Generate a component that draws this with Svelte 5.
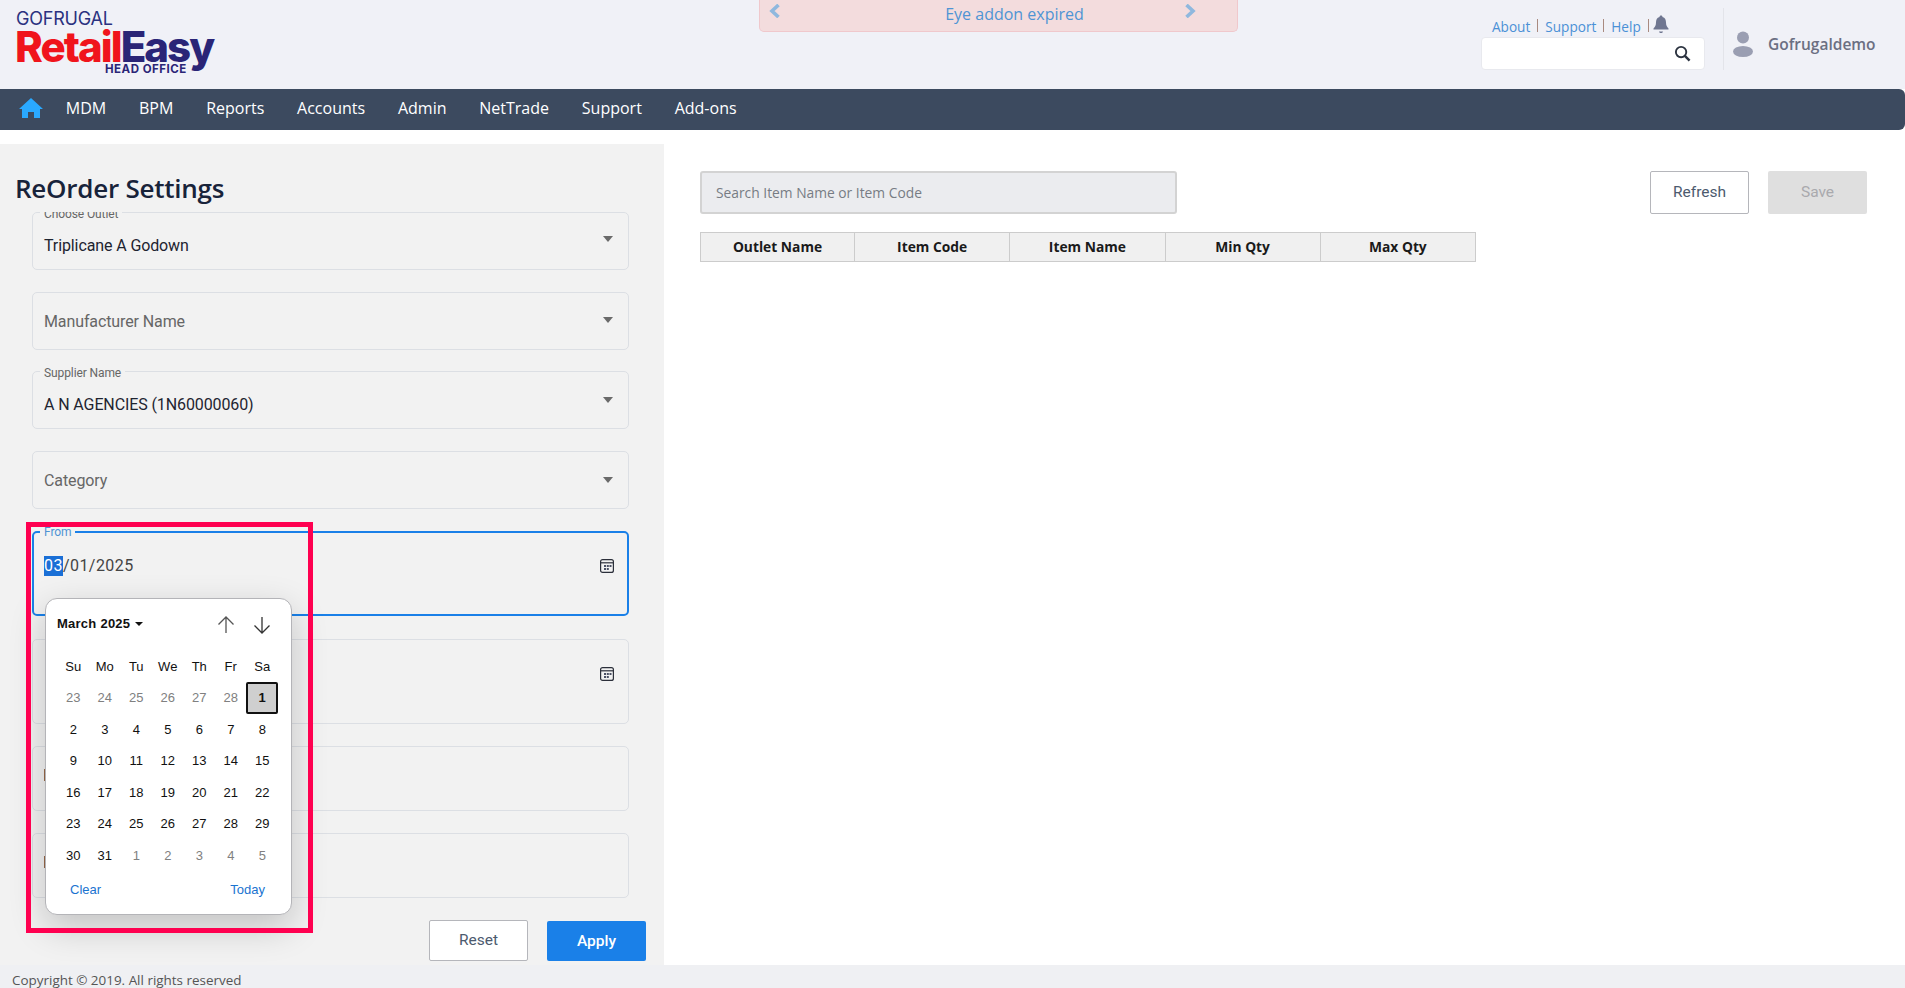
<script>
  const nav = ['MDM', 'BPM', 'Reports', 'Accounts', 'Admin', 'NetTrade', 'Support', 'Add-ons'];
  const days = ['Su', 'Mo', 'Tu', 'We', 'Th', 'Fr', 'Sa'];
  const columns = ['Outlet Name', 'Item Code', 'Item Name', 'Min Qty', 'Max Qty'];
  const cells = [
    ...[23, 24, 25, 26, 27, 28].map((d) => ({ d, muted: true })),
    ...Array.from({ length: 31 }, (_, i) => ({ d: i + 1, sel: i === 0 })),
    ...[1, 2, 3, 4, 5].map((d) => ({ d, muted: true }))
  ];
</script>

<div class="page">
  <header class="top">
    <div class="logo">
      <div class="brand">GOFRUGAL</div>
      <div class="name"><span class="red">Retail</span><span class="navy">Easy</span></div>
      <div class="office">HEAD OFFICE</div>
    </div>
    <div class="banner">
      <svg class="chev" viewBox="0 0 12 14" width="12" height="14"><path d="M9.5 1 3 7l6.500 6" fill="none" stroke="#8fb8de" stroke-width="3.600"/></svg>
      <span class="msg">Eye addon expired</span>
      <svg class="chev" viewBox="0 0 12 14" width="12" height="14"><path d="M2.500 1 9 7l-6.500 6" fill="none" stroke="#8fb8de" stroke-width="3.600"/></svg>
    </div>
    <div class="tools">
      <div class="links-col">
        <div class="links">
          <a href="#a">About</a><i></i><a href="#a">Support</a><i></i><a href="#a">Help</a><i></i>
          <svg viewBox="0 0 16 19" width="16" height="19"><path d="M8 0.500c1 0 1.500.7 1.500 1.500 2.700.7 3.500 3 3.500 5.500 0 3 1 4.500 2.500 6v1H.5v-1C2 12 3 10.500 3 7.500 3 5 3.800 2.700 6.500 2 6.500 1.200 7 .5 8 .5Z" fill="#6f7690"/><path d="M6 16.500h4c-.3 1-1 1.500-2 1.500s-1.700-.5-2-1.500Z" fill="#6f7690"/></svg>
        </div>
        <div class="search">
          <svg viewBox="0 0 18 18" width="17" height="17"><circle cx="7.500" cy="7.500" r="5.500" fill="none" stroke="#2c3340" stroke-width="2"/><path d="m11.500 11.500 5 5" stroke="#2c3340" stroke-width="2.600"/></svg>
        </div>
      </div>
      <div class="user">
        <svg viewBox="0 0 20 26" width="20" height="26"><circle cx="10" cy="6.500" r="6" fill="#9a9eb2"/><ellipse cx="10" cy="20.500" rx="10" ry="5.500" fill="#9a9eb2"/></svg>
        <span>Gofrugaldemo</span>
      </div>
    </div>
  </header>

  <nav class="nav">
    <svg class="home" viewBox="0 0 24 20" width="24" height="20"><path d="M12 0 24 11h-3v9h-6v-6H9v6H3v-9H0Z" fill="#2aa9ff"/></svg>
    {#each nav as n}<span>{n}</span>{/each}
  </nav>

  <main class="main">
    <section class="left">
      <h1>ReOrder Settings</h1>
      <div class="form">
        <div class="field"><label class="clip" for="a1">Choose Outlet</label><span id="a1" class="val filled">Triplicane A Godown</span><b class="arrow up1"></b></div>
        <div class="field"><span class="val ph">Manufacturer Name</span><b class="arrow"></b></div>
        <div class="field"><label for="a2">Supplier Name</label><span id="a2" class="val filled">A N AGENCIES (1N60000060)</span><b class="arrow"></b></div>
        <div class="field"><span class="val ph">Category</span><b class="arrow"></b></div>
        <div class="field date focus">
          <label for="a3">From</label>
          <span id="a3" class="val"><mark>03</mark>/01/2025</span>
          <svg class="cal" viewBox="0 0 14 14" width="14" height="14"><rect x=".6" y=".6" width="12.800" height="12.800" rx="2" fill="none" stroke="#2b2f3a" stroke-width="1.200"/><path d="M1 3.800h12" stroke="#2b2f3a" stroke-width="1.200"/><path d="M4 6h2v2H4zM6.800 6h2v2h-2zM9.500 6h2v2h-2zM4 9h2v2H4zM6.800 9h2v2h-2z" fill="#4a5064"/></svg>
        </div>
        <div class="field date">
          <svg class="cal" viewBox="0 0 14 14" width="14" height="14"><rect x=".6" y=".6" width="12.800" height="12.800" rx="2" fill="none" stroke="#2b2f3a" stroke-width="1.200"/><path d="M1 3.800h12" stroke="#2b2f3a" stroke-width="1.200"/><path d="M4 6h2v2H4zM6.800 6h2v2h-2zM9.500 6h2v2h-2zM4 9h2v2H4zM6.800 9h2v2h-2z" fill="#4a5064"/></svg>
        </div>
        <div class="field short"><span class="tick"></span></div>
        <div class="field short last"><span class="tick"></span></div>
      </div>
      <div class="actions">
        <button class="btn ghost">Reset</button>
        <button class="btn primary">Apply</button>
      </div>

      <div class="popover">
        <div class="pop-head">
          <strong>March 2025</strong><b class="caret"></b>
          <svg class="nav-a" viewBox="0 0 18 18" width="18" height="18"><path d="M9 17V1M1.500 8.500 9 1l7.500 7.500" fill="none" stroke="#555" stroke-width="1.300"/></svg>
          <svg class="nav-b" viewBox="0 0 18 18" width="18" height="18"><path d="M9 1v16M1.500 9.500 9 17l7.500-7.500" fill="none" stroke="#333" stroke-width="1.300"/></svg>
        </div>
        <div class="grid">
          {#each days as d}<span class="cell">{d}</span>{/each}
          {#each cells as c}<span class="cell" class:muted={c.muted} class:sel={c.sel}>{c.d}</span>{/each}
        </div>
        <div class="pop-foot"><span>Clear</span><span>Today</span></div>
      </div>
      <div class="annot"></div>
    </section>

    <section class="right">
      <div class="toolbar">
        <div class="find">Search Item Name or Item Code</div>
        <div class="tool-btns">
          <button class="btn ghost tall">Refresh</button>
          <button class="btn off tall">Save</button>
        </div>
      </div>
      <div class="thead">
        {#each columns as c}<div>{c}</div>{/each}
      </div>
    </section>
  </main>

  <footer class="foot">Copyright © 2019. All rights reserved</footer>
</div>

<style>
  :global(body) { margin: 0; background: #fff; overflow: hidden; }
  .page { width: 1905px; height: 988px; display: flex; flex-direction: column; font-family: "Open Sans", sans-serif; overflow: hidden; }

  .top { height: 89px; flex: none; background: #f0f1f7; display: grid; grid-template-columns: 759px 479px 1fr; align-items: start; }
  .logo { padding: 11px 0 0 15px; display: flex; flex-direction: column; font-family: Inter, sans-serif; }
  .brand { font-size: 18px; line-height: 16px; color: #2b3180; letter-spacing: -0.200px; font-weight: 400; padding-left: 1px; }
  .name { font-size: 42px; line-height: 35px; font-weight: 800; letter-spacing: -1.950px; margin-top: 2px; }
  .red { color: #f0141c; }
  .navy { color: #2a2577; }
  .office { font-size: 11.500px; line-height: 12px; font-weight: 700; color: #2a2577; margin: -1px 0 0 90px; letter-spacing: 0.500px; }

  .banner { height: 32px; box-sizing: border-box; background: #f3dcdd; border: 1px solid #f0c8cc; border-top: 0; border-radius: 0 0 5px 5px; display: flex; justify-content: space-between; padding: 3px 41px 0 9px; color: #4f94d4; font-size: 16px; line-height: 22px; }
  .msg { padding-left: 64px; }
  .chev { margin-top: 1px; }

  .tools { display: flex; padding: 8px 0 0 243px; }
  .links-col { width: 224px; }
  .links { height: 29px; padding-left: 11px; display: flex; align-items: center; font-size: 13.600px; color: #4a90d6; box-sizing: border-box; padding-top: 8px; }
  .links a { color: inherit; text-decoration: none; }
  .links i { width: 1px; height: 13px; background: #a98a80; margin: -3px 7px 0; }
  .links svg { margin: -5px 0 0 -3px; }
  .search { height: 33px; box-sizing: border-box; background: #fff; border: 1px solid #e8e9ee; border-radius: 4px; display: flex; justify-content: flex-end; align-items: center; padding-right: 13px; }
  .user { margin-left: 18px; height: 62px; box-sizing: border-box; border-left: 1px solid #e3e4ea; padding: 10px 0 0 9px; display: flex; align-items: center; gap: 15px; font-size: 15.500px; font-weight: 600; color: #6b6f82; }

  .nav { height: 41px; box-sizing: border-box; padding-bottom: 3px; flex: none; background: #3c4a5f; border-radius: 0 6px 6px 0; display: flex; align-items: center; gap: 32.800px; padding-left: 19px; color: #fff; font-size: 16px; }
  .home { margin-right: -10px; }

  .main { flex: 1; display: flex; padding-top: 14px; min-height: 0; }
  .left { width: 664px; flex: none; background: #f2f2f2; position: relative; box-sizing: border-box; }
  h1 { margin: 0; padding: 26px 0 0 15px; height: 42px; font-size: 26px; line-height: 36px; font-weight: 600; color: #18233a; letter-spacing: -0.250px; }

  .form { height: 688px; padding: 0 35px 0 32px; display: flex; flex-direction: column; gap: 21.700px; overflow: hidden; box-sizing: border-box; font-family: Roboto, sans-serif; }
  .field { height: 58px; flex: none; box-sizing: border-box; border: 1px solid #dcdfe4; border-radius: 5px; position: relative; display: flex; align-items: center; padding: 0 12px 0 11px; }
  .field label { position: absolute; top: -6px; left: 7px; padding: 0 4px; background: #f2f2f2; font-size: 12px; line-height: 14px; color: #666; letter-spacing: -0.100px; }
  .val { flex: 1; font-size: 16px; line-height: 20px; color: #1e2430; white-space: nowrap; letter-spacing: -0.110px; }
  .val.filled { padding-top: 9px; }
  .val.ph { color: #666; padding-top: 2px; }
  .arrow { width: 0; height: 0; border: 5.500px solid transparent; border-top: 6px solid #6a6a6a; border-bottom: 0; margin: 0 3px 1px 0; }
  .arrow.up1 { margin-bottom: 4px; }

  .date { height: 85px; align-items: flex-start; padding-top: 24px; margin-top: 0.700px; }
  .date .val { color: #444; letter-spacing: 0.450px; }
  .date .cal { position: absolute; right: 14px; top: 27px; }
  .focus { border: 2px solid #1a80e8; padding-left: 10px; padding-top: 23px; }
  .focus label { top: -8px; left: 6px; color: #4f94d4; }
  .focus .cal { right: 13px; top: 26px; }
  mark { background: #1a6fd6; color: #fff; display: inline-block; }
  .short { height: 65px; }
  .last { margin-top: 1px; }
  .tick { width: 1px; height: 12px; background: #9a6a4a; align-self: flex-start; margin-top: 22px; }

  .actions { display: flex; justify-content: flex-end; gap: 19px; padding: 19.500px 18px 0 0; }
  .btn { width: 99px; height: 41px; box-sizing: border-box; border-radius: 2px; font-family: Roboto, sans-serif; font-size: 15.500px; padding: 0; }
  .ghost { background: #fff; border: 1px solid #b5b6bb; color: #4c5a6e; }
  .primary { background: #1a80e8; border: 0; color: #fff; height: 40px; margin-top: 1px; font-weight: 500; }
  .off { background: #dfdfdf; border: 0; color: #a9a9ad; }
  .tall { height: 43px; padding-bottom: 2px; }

  .popover { position: absolute; left: 45px; top: 454px; width: 247px; height: 317px; box-sizing: border-box; background: #fff; border: 1px solid #b4b4b8; border-radius: 12px; box-shadow: 0 12px 36px rgba(0, 0, 0, .2); font-family: "Liberation Sans", Arial, sans-serif; z-index: 2; }
  .pop-head { height: 51.500px; position: relative; display: flex; align-items: center; padding: 0 0 2px 11px; box-sizing: border-box; gap: 5px; font-size: 13px; color: #111; }
  .pop-head strong { letter-spacing: 0.250px; }
  .caret { border: 4px solid transparent; border-top: 4px solid #111; border-bottom: 0; }
  .nav-a { position: absolute; left: 171px; top: 17px; }
  .nav-b { position: absolute; left: 207px; top: 17px; }
  .grid { display: grid; grid-template-columns: repeat(7, 31.500px); grid-auto-rows: 31.500px; padding-left: 11.500px; font-size: 13px; color: #111; }
  .cell { display: flex; align-items: center; justify-content: center; box-sizing: border-box; }
  .muted { color: #808080; }
  .sel { background: #cfcfcf; border: 2px solid #111; border-radius: 2px; font-weight: 700; margin-left: -0.500px; }
  .pop-foot { display: flex; justify-content: space-between; padding: 10.500px 26px 0 24px; color: #1a73d0; font-size: 13px; line-height: 16px; }

  .annot { position: absolute; left: 26px; top: 378px; width: 287px; height: 411px; box-sizing: border-box; border: 5px solid #ff0050; z-index: 3; pointer-events: none; }

  .right { flex: 1; padding: 27px 38px 0 36px; }
  .toolbar { display: flex; justify-content: space-between; }
  .find { width: 477px; height: 43px; box-sizing: border-box; background: #ebecef; border: 2px solid #d3d3d3; border-radius: 3px; padding-left: 14px; display: flex; align-items: center; font-size: 13.800px; color: #777c84; }
  .tool-btns { display: flex; gap: 19px; }
  .thead { margin-top: 18px; width: 776px; height: 30px; box-sizing: border-box; display: grid; grid-template-columns: 153px repeat(4, 1fr); background: #f0f0f0; border: 1px solid #ccc; }
  .thead div { display: flex; align-items: center; justify-content: center; font-size: 13.800px; font-weight: 700; color: #1a1a1a; border-left: 1px solid #ccc; padding-bottom: 2px; }
  .thead div:first-child { border-left: 0; }

  .foot { height: 23px; flex: none; background: #eff0f3; padding: 6px 0 0 12px; box-sizing: border-box; font-size: 13.450px; line-height: 18px; color: #555; overflow: hidden; white-space: nowrap; }
</style>
